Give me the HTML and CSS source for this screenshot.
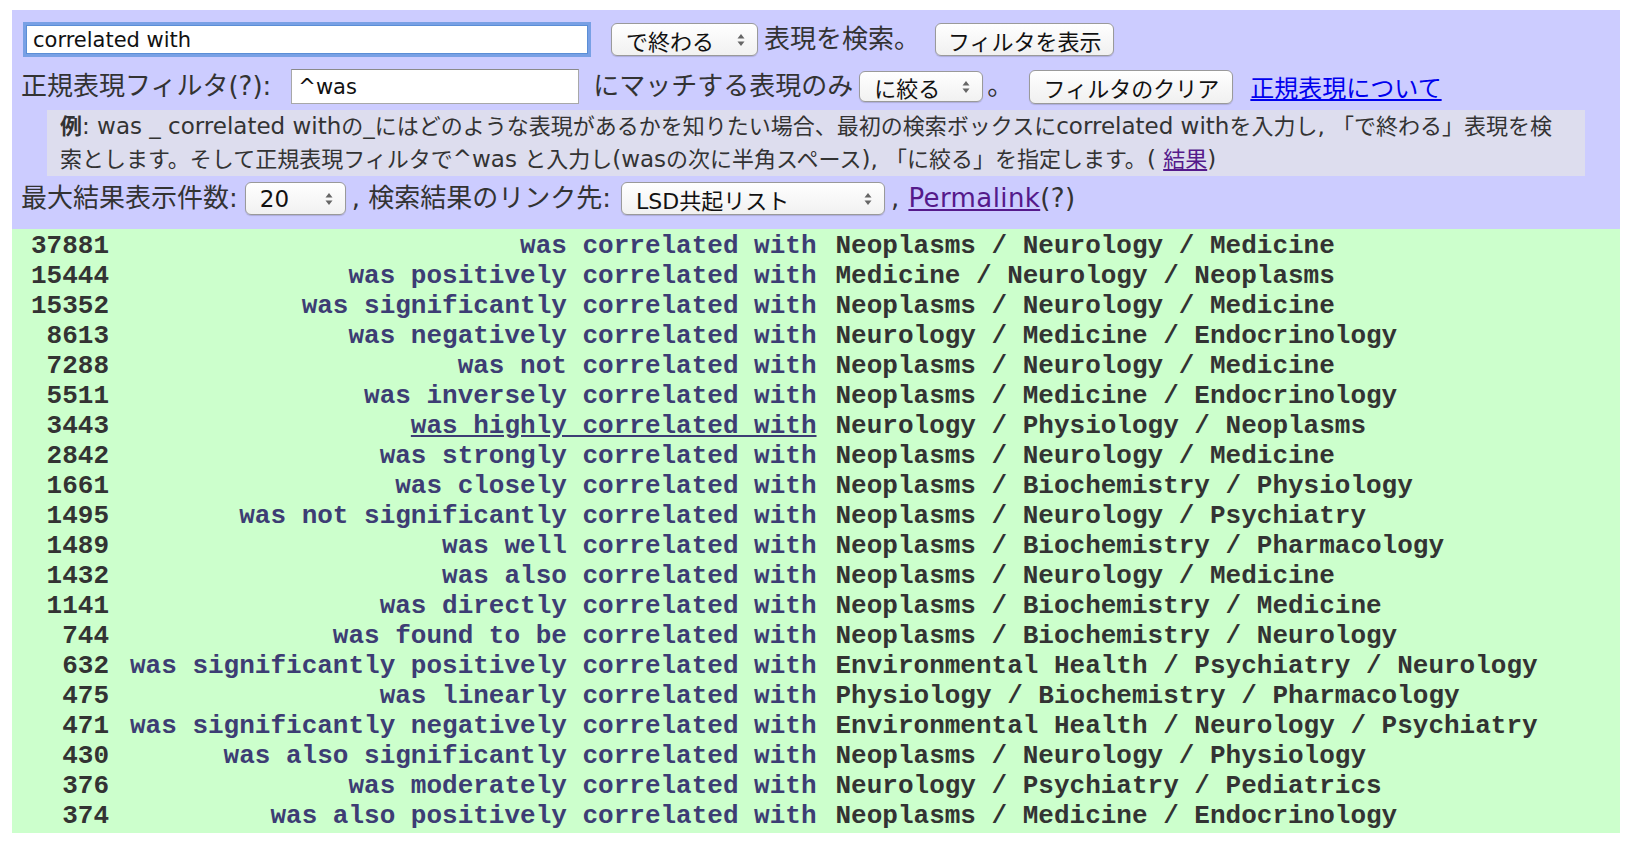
FILE: index.html
```html
<!DOCTYPE html>
<html lang="ja">
<head>
<meta charset="utf-8">
<title>LSD 検索</title>
<link rel="stylesheet" href="styles.css">
</head>
<body>
<div class="panel">
  <div class="row row1">
    <input class="field field-main" type="text" value="correlated with">
    <div class="sel sel-end"><span class="sel-text">で終わる</span><svg class="arr" viewBox="0 0 8 14" width="8" height="14"><path d="M0.5 5.5 L4 1 L7.5 5.5 Z M0.5 8.5 L4 13 L7.5 8.5 Z"/></svg></div>
    <span class="lbl lbl-search">表現を検索。</span>
    <button class="btn btn-show" type="button">フィルタを表示</button>
  </div>
  <div class="row row2">
    <span class="lbl">正規表現フィルタ(?):</span>
    <input class="field field-re" type="text" value="^was">
    <span class="lbl lbl-match">にマッチする表現のみ</span>
    <div class="sel sel-only"><span class="sel-text">に絞る</span><svg class="arr" viewBox="0 0 8 14" width="8" height="14"><path d="M0.5 5.5 L4 1 L7.5 5.5 Z M0.5 8.5 L4 13 L7.5 8.5 Z"/></svg></div>
    <span class="lbl lbl-dot">。</span>
    <button class="btn btn-clear" type="button">フィルタのクリア</button>
    <a class="link link-about" href="#">正規表現について</a>
  </div>
  <div class="example">
    <b>例</b><span class="lt">: was _ correlated with</span>の<span class="lt">_</span>にはどのような表現があるかを知りたい場合、最初の検索ボックスに<span class="lt">correlated with</span>を入力し<span class="lt">, </span>「で終わる」表現を検<br>索とします。そして正規表現フィルタで<span class="lt">^was </span>と入力し<span class="lt">(was</span>の次に半角スペース<span class="lt">), </span>「に絞る」を指定します。<span class="lt">( </span><a class="visited" href="#">結果</a><span class="lt">)</span>
  </div>
  <div class="row row3">
    <span class="lbl">最大結果表示件数:</span>
    <div class="sel sel-num"><span class="sel-text">20</span><svg class="arr" viewBox="0 0 8 14" width="8" height="14"><path d="M0.5 5.5 L4 1 L7.5 5.5 Z M0.5 8.5 L4 13 L7.5 8.5 Z"/></svg></div>
    <span class="lbl lbl-link">, 検索結果のリンク先:</span>
    <div class="sel sel-dest"><span class="sel-text">LSD共起リスト</span><svg class="arr" viewBox="0 0 8 14" width="8" height="14"><path d="M0.5 5.5 L4 1 L7.5 5.5 Z M0.5 8.5 L4 13 L7.5 8.5 Z"/></svg></div>
    <span class="lbl lbl-perma">, <a class="visited" href="#">Permalink</a>(?)</span>
  </div>
</div>
<div class="results">
  <table class="res">
    <tr><td class="n">37881</td><td class="ph"><a href="#">was correlated with</a></td><td class="cat">Neoplasms / Neurology / Medicine</td></tr>
    <tr><td class="n">15444</td><td class="ph"><a href="#">was positively correlated with</a></td><td class="cat">Medicine / Neurology / Neoplasms</td></tr>
    <tr><td class="n">15352</td><td class="ph"><a href="#">was significantly correlated with</a></td><td class="cat">Neoplasms / Neurology / Medicine</td></tr>
    <tr><td class="n">8613</td><td class="ph"><a href="#">was negatively correlated with</a></td><td class="cat">Neurology / Medicine / Endocrinology</td></tr>
    <tr><td class="n">7288</td><td class="ph"><a href="#">was not correlated with</a></td><td class="cat">Neoplasms / Neurology / Medicine</td></tr>
    <tr><td class="n">5511</td><td class="ph"><a href="#">was inversely correlated with</a></td><td class="cat">Neoplasms / Medicine / Endocrinology</td></tr>
    <tr><td class="n">3443</td><td class="ph"><a class="hover" href="#">was highly correlated with</a></td><td class="cat">Neurology / Physiology / Neoplasms</td></tr>
    <tr><td class="n">2842</td><td class="ph"><a href="#">was strongly correlated with</a></td><td class="cat">Neoplasms / Neurology / Medicine</td></tr>
    <tr><td class="n">1661</td><td class="ph"><a href="#">was closely correlated with</a></td><td class="cat">Neoplasms / Biochemistry / Physiology</td></tr>
    <tr><td class="n">1495</td><td class="ph"><a href="#">was not significantly correlated with</a></td><td class="cat">Neoplasms / Neurology / Psychiatry</td></tr>
    <tr><td class="n">1489</td><td class="ph"><a href="#">was well correlated with</a></td><td class="cat">Neoplasms / Biochemistry / Pharmacology</td></tr>
    <tr><td class="n">1432</td><td class="ph"><a href="#">was also correlated with</a></td><td class="cat">Neoplasms / Neurology / Medicine</td></tr>
    <tr><td class="n">1141</td><td class="ph"><a href="#">was directly correlated with</a></td><td class="cat">Neoplasms / Biochemistry / Medicine</td></tr>
    <tr><td class="n">744</td><td class="ph"><a href="#">was found to be correlated with</a></td><td class="cat">Neoplasms / Biochemistry / Neurology</td></tr>
    <tr><td class="n">632</td><td class="ph"><a href="#">was significantly positively correlated with</a></td><td class="cat">Environmental Health / Psychiatry / Neurology</td></tr>
    <tr><td class="n">475</td><td class="ph"><a href="#">was linearly correlated with</a></td><td class="cat">Physiology / Biochemistry / Pharmacology</td></tr>
    <tr><td class="n">471</td><td class="ph"><a href="#">was significantly negatively correlated with</a></td><td class="cat">Environmental Health / Neurology / Psychiatry</td></tr>
    <tr><td class="n">430</td><td class="ph"><a href="#">was also significantly correlated with</a></td><td class="cat">Neoplasms / Neurology / Physiology</td></tr>
    <tr><td class="n">376</td><td class="ph"><a href="#">was moderately correlated with</a></td><td class="cat">Neurology / Psychiatry / Pediatrics</td></tr>
    <tr><td class="n">374</td><td class="ph"><a href="#">was also positively correlated with</a></td><td class="cat">Neoplasms / Medicine / Endocrinology</td></tr>
  </table>
</div>
</body>
</html>
```
FILE: styles.css
```css
* { box-sizing: border-box; }
html, body { background: #ffffff; }
body {
  margin: 10px 12px 0 12px;
  font-family: "DejaVu Sans", "Noto Sans CJK JP", sans-serif;
  color: #333333;
}
.panel {
  background: #ccccff;
  padding: 12px 0 14px 9px;
}
.row {
  display: flex;
  align-items: center;
  height: 35px;
  white-space: nowrap;
}
.row2 { margin-top: 12px; }
.row3 { margin-top: 6px; height: 33px; }
.lbl {
  font-size: 26px;
  line-height: 35px;
  color: #333333;
}
.field {
  height: 35px;
  border: 1px solid #a8a8a8;
  border-top-color: #8a8a8a;
  background: #ffffff;
  font-family: "DejaVu Sans", "Noto Sans CJK JP", sans-serif;
  font-size: 21px;
  color: #111111;
  padding: 0 0 0 6px;
  margin: 0;
}
.field-main {
  width: 562px;
  height: 29px;
  margin-left: 5px;
  border: 1px solid #5b8ed6;
  box-shadow: 0 0 0 3px rgba(104, 152, 224, 0.85);
  outline: none;
}
.field-re {
  width: 288px;
  margin-left: 20px;
}
.sel {
  display: flex;
  align-items: center;
  justify-content: space-between;
  height: 33px;
  border: 1px solid #9a9a9a;
  border-radius: 6px;
  background: linear-gradient(#ffffff, #f1f1f1);
  box-shadow: 0 1px 1px rgba(0, 0, 0, 0.15);
  padding: 0 12px 0 14px;
  font-family: "DejaVu Sans", "Noto Sans CJK JP", sans-serif;
  font-size: 22px;
  color: #111111;
}
.sel .arr { fill: #666666; flex: none; }
.sel-end { width: 147px; margin-left: 23px; }
.sel-only { width: 124px; height: 31px; margin-left: 6px; }
.sel-num { width: 101px; margin-left: 7px; }
.sel-num .sel-text { font-size: 23px; }
.sel-dest { width: 264px; margin-left: 10px; }
.lbl-search { margin-left: 6px; }
.lbl-match { margin-left: 14px; }
.lbl-dot { margin-left: 4px; }
.lbl-link { margin-left: 6px; }
.lbl-perma { margin-left: 6px; letter-spacing: 0.4px; }
.btn {
  height: 33px;
  border: 1px solid #9a9a9a;
  border-radius: 6px;
  background: linear-gradient(#ffffff, #f0f0f0);
  box-shadow: 0 1px 1px rgba(0, 0, 0, 0.15);
  font-family: "DejaVu Sans", "Noto Sans CJK JP", sans-serif;
  font-size: 22px;
  color: #111111;
  padding: 0 12px;
  margin: 0;
}
.btn-show { width: 179px; margin-left: 15px; }
.btn-clear { width: 204px; height: 34px; margin-left: 16px; }
.link {
  font-size: 24px;
  color: #0000ee;
  text-decoration: underline;
}
.link-about { margin-left: 17px; }
a.visited { color: #551a8b; text-decoration: underline; }
.example {
  margin: 6px 35px 0 26px;
  background: #ddddee;
  padding: 0 0 0 13px;
  font-size: 22px;
  line-height: 32px;
  color: #333333;
  white-space: nowrap;
}
.example b { font-weight: bold; }
.example .lt { font-size: 23px; }

.results {
  background: #ccffcc;
  padding: 2px 0;
}
.res {
  width: 100%;
  border-collapse: collapse;
  font-family: "Liberation Mono", "Courier New", monospace;
  font-weight: bold;
  font-size: 26px;
  line-height: 30px;
}
.res td {
  padding: 0;
  height: 30px;
  white-space: pre;
  vertical-align: middle;
}
.res td.n {
  width: 97px;
  text-align: right;
  color: #333333;
}
.res td.ph {
  width: 1px;
  text-align: right;
  padding-left: 21px;
  padding-right: 19px;
}
.res td.ph a {
  color: #3d3d74;
  text-decoration: none;
}
.res td.ph a.hover { text-decoration: underline; }
.res td.cat {
  text-align: left;
  color: #333333;
}
```
